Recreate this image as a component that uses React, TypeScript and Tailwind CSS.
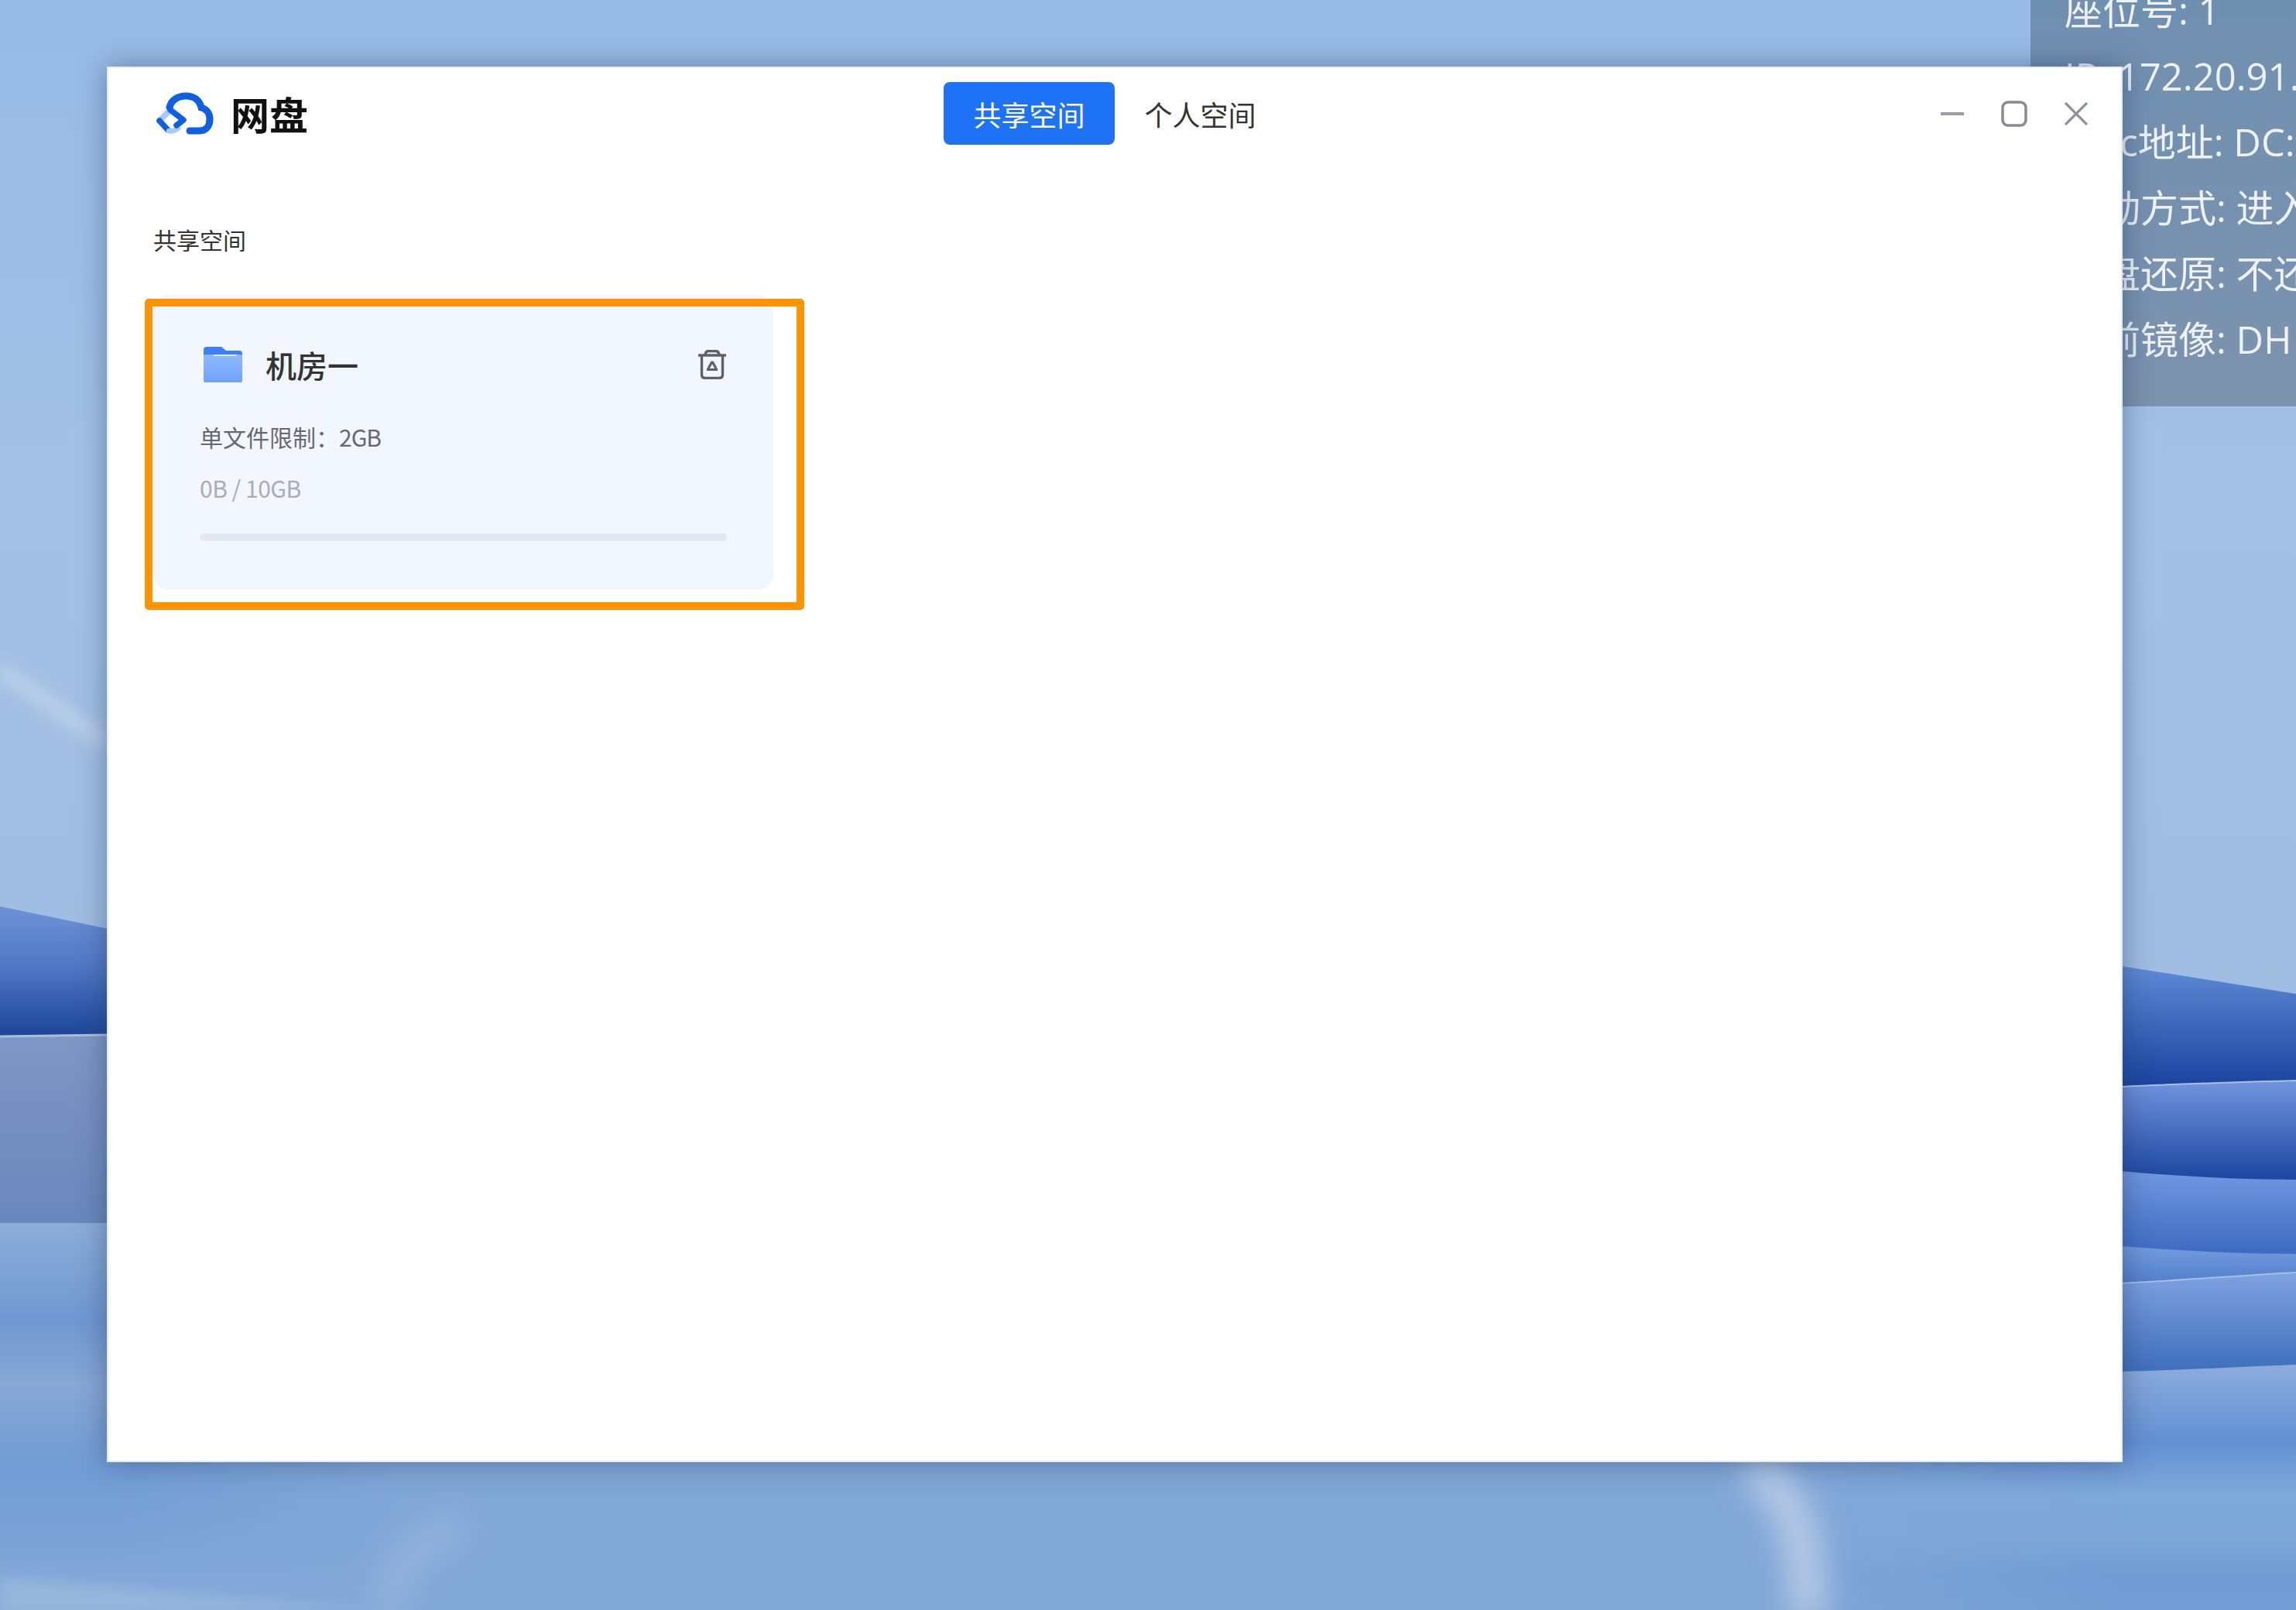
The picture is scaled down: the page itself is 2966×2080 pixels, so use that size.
import React from 'react';

const cjk = "font-['Noto_Sans_CJK_SC','Noto_Sans',sans-serif]";

const infoLines = ['座位号: 1', 'IP: 172.20.91.7', 'Mac地址: DC:21:5C', '启动方式: 进入系统', '磁盘还原: 不还原', '当前镜像: DH'];

const Wallpaper = () => (
    <svg className="absolute inset-0" width="2966" height="2080" viewBox="0 0 2966 2080">
        <defs>
            <linearGradient id="sky" x1="0" y1="0" x2="0" y2="1300" gradientUnits="userSpaceOnUse">
                <stop offset="0" stopColor="#97bbe6" />
                <stop offset="0.5" stopColor="#a4c1e5" />
                <stop offset="1" stopColor="#9fbde0" />
            </linearGradient>
            <linearGradient id="l1" x1="0" y1="1171" x2="0" y2="1338" gradientUnits="userSpaceOnUse">
                <stop offset="0" stopColor="#6d92d6" />
                <stop offset="0.45" stopColor="#5379c6" />
                <stop offset="1" stopColor="#1d4699" />
            </linearGradient>
            <linearGradient id="l2" x1="0" y1="1338" x2="0" y2="1580" gradientUnits="userSpaceOnUse">
                <stop offset="0" stopColor="#8096c4" />
                <stop offset="1" stopColor="#6a87bc" />
            </linearGradient>
            <linearGradient id="low" x1="0" y1="1580" x2="0" y2="2080" gradientUnits="userSpaceOnUse">
                <stop offset="0" stopColor="#8dadd8" />
                <stop offset="0.25" stopColor="#7098d0" />
                <stop offset="0.42" stopColor="#88a8d6" />
                <stop offset="0.62" stopColor="#719cd4" />
                <stop offset="1" stopColor="#86a9d8" />
            </linearGradient>
            <linearGradient id="r1" x1="0" y1="1248" x2="0" y2="1400" gradientUnits="userSpaceOnUse">
                <stop offset="0" stopColor="#5f8ad6" />
                <stop offset="1" stopColor="#1b459f" />
            </linearGradient>
            <linearGradient id="r2" x1="0" y1="1400" x2="0" y2="1520" gradientUnits="userSpaceOnUse">
                <stop offset="0" stopColor="#7092dc" />
                <stop offset="1" stopColor="#1e48a2" />
            </linearGradient>
            <linearGradient id="r3" x1="0" y1="1518" x2="0" y2="1615" gradientUnits="userSpaceOnUse">
                <stop offset="0" stopColor="#6f95de" />
                <stop offset="1" stopColor="#3f6dc2" />
            </linearGradient>
            <linearGradient id="r4" x1="0" y1="1615" x2="0" y2="1655" gradientUnits="userSpaceOnUse">
                <stop offset="0" stopColor="#7098dc" />
                <stop offset="1" stopColor="#5380cc" />
            </linearGradient>
            <linearGradient id="r5" x1="0" y1="1650" x2="0" y2="1768" gradientUnits="userSpaceOnUse">
                <stop offset="0" stopColor="#7da0de" />
                <stop offset="1" stopColor="#4170bd" />
            </linearGradient>
            <linearGradient id="r6" x1="0" y1="1768" x2="0" y2="2080" gradientUnits="userSpaceOnUse">
                <stop offset="0" stopColor="#8aabdc" />
                <stop offset="0.3" stopColor="#6390d2" />
                <stop offset="0.52" stopColor="#7ea7da" />
                <stop offset="0.7" stopColor="#7ea6d8" />
                <stop offset="0.85" stopColor="#709bd3" />
                <stop offset="1" stopColor="#739dd3" />
            </linearGradient>
            <linearGradient id="mid" x1="138" y1="0" x2="2742" y2="0" gradientUnits="userSpaceOnUse">
                <stop offset="0" stopColor="#81a7d7" stopOpacity="0" />
                <stop offset="0.15" stopColor="#81a7d7" />
                <stop offset="0.82" stopColor="#81a7d7" />
                <stop offset="1" stopColor="#81a7d7" stopOpacity="0" />
            </linearGradient>
            <filter id="soft" x="-100%" y="-100%" width="300%" height="300%">
                <feGaussianBlur stdDeviation="9" />
            </filter>
            <filter id="softer" x="-300%" y="-100%" width="700%" height="300%">
                <feGaussianBlur stdDeviation="20" />
            </filter>
        </defs>
        <rect width="2966" height="2080" fill="url(#sky)" />
        <path d="M0 867 C50 895 95 935 138 958" fill="none" stroke="#c0d4ea" strokeWidth="20" opacity="0.8" filter="url(#soft)" />

        {/* left side bands */}
        <path d="M0 1171 L140 1200 L140 2080 L0 2080 Z" fill="url(#l1)" />
        <path d="M0 1338 L140 1336 L140 1580 L0 1580 Z" fill="url(#l2)" />
        <path d="M0 1580 L1440 1580 L1440 2080 L0 2080 Z" fill="url(#low)" />
        <path d="M0 1339 L140 1337" stroke="#a9bedd" strokeWidth="3" fill="none" />

        {/* right side bands */}
        <path d="M2740 1248 L2966 1284 L2966 2080 L2740 2080 Z" fill="url(#r1)" />
        <path d="M2740 1404 C2820 1400 2890 1398 2966 1396 L2966 2080 L2740 2080 Z" fill="url(#r2)" />
        <path d="M2740 1513 C2820 1520 2890 1524 2966 1524 L2966 2080 L2740 2080 Z" fill="url(#r3)" />
        <path d="M2740 1610 C2820 1616 2890 1620 2966 1620 L2966 2080 L2740 2080 Z" fill="url(#r4)" />
        <path d="M2740 1658 C2820 1654 2890 1648 2966 1644 L2966 2080 L2740 2080 Z" fill="url(#r5)" />
        <path d="M1440 1772 L2740 1772 C2820 1770 2890 1766 2966 1763 L2966 2080 L1440 2080 Z" fill="url(#r6)" />
        <path d="M2740 1404 C2820 1400 2890 1398 2966 1396" stroke="#a8c0e6" strokeWidth="2" fill="none" />
        <path d="M2740 1658 C2820 1654 2890 1648 2966 1644" stroke="#a3c0e4" strokeWidth="2" fill="none" />

        {/* area under the window, fades into both sides */}
        <rect x="138" y="1880" width="2604" height="200" fill="url(#mid)" />

        {/* light streaks at the bottom */}
        <path d="M2262 1890 C2310 1930 2335 1970 2335 2090" fill="none" stroke="#bccde6" strokeWidth="44" filter="url(#softer)" />
        <path d="M600 1975 C530 1995 495 2030 510 2090" fill="none" stroke="#a9c1e0" strokeWidth="44" opacity="0.45" filter="url(#softer)" />
        <path d="M0 2037 L520 2085 L0 2085 Z" fill="#9fbcdd" opacity="0.7" filter="url(#soft)" />
    </svg>
);

const InfoPanel = () => (
    <div className="absolute top-0 right-0 w-[343px] h-[525px] overflow-hidden flex flex-col justify-end pb-[44px] pl-[44px] bg-gradient-to-b from-[#7090b1] to-[#7c93ae] font-['Open_Sans','Noto_Sans_CJK_SC',sans-serif] text-[49px] leading-[85px] text-[#eef2f7] whitespace-nowrap">
        {infoLines.map((line) => (
            <div key={line}>{line}</div>
        ))}
    </div>
);

const CloudLogo = () => (
    <svg width="76" height="56" viewBox="0 0 76 56" fill="none">
        <path d="M19 20 C21 10 30 5 40 5 C51 5 58 11 60 20 C68 22 71 29 71 35 C71 44 66 50 58 50 L45 50" stroke="#0f5fe3" strokeWidth="9" strokeLinecap="round" />
        <path d="M17 26 L6 37" stroke="#a9c9fa" strokeWidth="7.5" strokeLinecap="round" />
        <path d="M6 37 L17 49" stroke="#0f5fe3" strokeWidth="7.5" strokeLinecap="round" />
        <path d="M18 50 C22 51 26 50 30 47" stroke="#a9c9fa" strokeWidth="6.5" strokeLinecap="round" />
        <path d="M20 23 L37 36 L28 43" stroke="#0f5fe3" strokeWidth="7.5" strokeLinecap="round" strokeLinejoin="round" />
    </svg>
);

const FolderIcon = () => (
    <svg width="50" height="46" viewBox="0 0 50 46">
        <defs>
            <linearGradient id="folderFront" x1="0" y1="0" x2="0" y2="1">
                <stop offset="0" stopColor="#8fb8ff" />
                <stop offset="1" stopColor="#6fa2fb" />
            </linearGradient>
        </defs>
        <path d="M0 4 Q0 0 4 0 L23 0 L29 5 L46 5 Q50 5 50 9 L50 20 L0 20 Z" fill="#3d80f7" />
        <rect x="0" y="10" width="50" height="36" rx="2" fill="url(#folderFront)" />
        <path d="M13 11 L43 11" stroke="#dce9ff" strokeWidth="2" />
    </svg>
);

const RecycleIcon = () => (
    <svg width="36" height="38" viewBox="0 0 36 38" fill="none" stroke="#5d6269" strokeWidth="3.4">
        <path d="M1 7 L35 7" strokeLinecap="round" />
        <path d="M9 7 C9 3 11 1.5 14 1.5 L22 1.5 C25 1.5 27 3 27 7" />
        <path d="M4.5 7 L4.5 32 Q4.5 36.5 9 36.5 L27 36.5 Q31.5 36.5 31.5 32 L31.5 7" />
        <path d="M18 15 L13 24 M18 15 L23 24 M11 25.5 L25 25.5" strokeWidth="3.2" />
    </svg>
);

const WindowControls = () => (
    <div className="flex items-center gap-[48px]">
        <svg width="30" height="34" viewBox="0 0 30 34" fill="none">
            <path d="M0 17 L30 17" stroke="#9a9da3" strokeWidth="4" />
        </svg>
        <svg width="34" height="34" viewBox="0 0 34 34" fill="none">
            <rect x="2" y="2" width="30" height="30" rx="7" stroke="#878b92" strokeWidth="3.5" />
        </svg>
        <svg width="30" height="30" viewBox="0 0 30 30" fill="none">
            <path d="M1 1 L29 29 M29 1 L1 29" stroke="#8c9096" strokeWidth="3.2" />
        </svg>
    </div>
);

const SpaceCard = () => (
    <div className="relative w-[801px] h-[381px] rounded-[20px] bg-[#f1f6ff] pt-[67px] px-[60px]">
        <div className="flex items-center h-[46px]">
            <div className="ml-[5px]">
                <FolderIcon />
            </div>
            <span className="ml-[30px] text-[40px] leading-[46px] font-medium text-[#333]">机房一</span>
            <div className="ml-auto mr-[1px]">
                <RecycleIcon />
            </div>
        </div>
        <div className="mt-[50px] text-[30px] leading-[40px] text-[#666a70]">
            单文件限制：<span className="tracking-[-1px]">2GB</span>
        </div>
        <div className="mt-[26px] text-[30px] leading-[40px] tracking-[-0.5px] text-[#a9adb5]">0B / 10GB</div>
        <div className="mt-[39px] h-[10px] rounded-full bg-[#e3e8f1]" />
        {/* highlight frame */}
        <div className="absolute left-[-11px] top-[5px] w-[852px] h-[402px] rounded-[5px] border-[10px] border-[#ff9300]" />
    </div>
);

export default function App() {
    return (
        <div className={`relative w-[2966px] h-[2080px] overflow-hidden ${cjk}`}>
            <Wallpaper />
            <InfoPanel />
            <div className="absolute left-[138px] top-[86px] w-[2604px] h-[1803px] bg-white shadow-[0_0_36px_rgba(30,50,90,0.45),inset_0_0_0_2px_rgba(190,205,225,0.4)]">
                <header className="grid grid-cols-[1fr_auto_1fr] items-center pt-[20px]">
                    <div className="flex items-center pl-[62px] gap-[22px]">
                        <CloudLogo />
                        <span className="text-[50px] leading-[81px] font-bold text-[#111]">网盘</span>
                    </div>
                    <div className="flex items-center">
                        <button className="w-[221px] h-[81px] rounded-[8px] bg-[#1e72f5] text-[36px] text-white">共享空间</button>
                        <button className="w-[221px] h-[81px] text-[36px] text-[#333]">个人空间</button>
                    </div>
                    <div className="flex justify-end pr-[45px]">
                        <WindowControls />
                    </div>
                </header>
                <main className="px-[60px] pt-[102px]">
                    <h2 className="text-[30px] leading-[40px] font-normal text-[#333]">共享空间</h2>
                    <div className="mt-[52px]">
                        <SpaceCard />
                    </div>
                </main>
            </div>
        </div>
    );
}
